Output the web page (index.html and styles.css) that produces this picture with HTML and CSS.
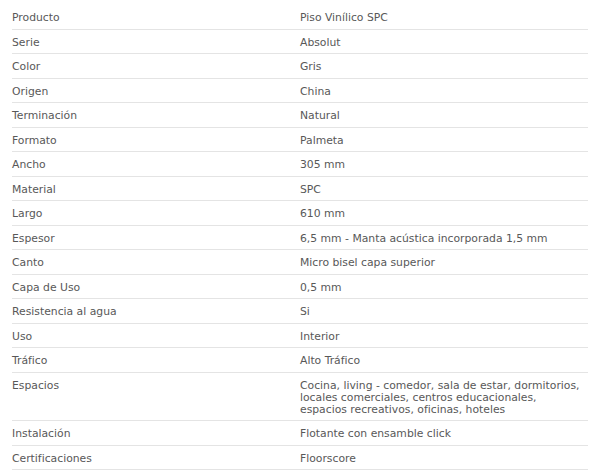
FILE: index.html
```html
<!DOCTYPE html>
<html lang="es">
<head>
<meta charset="utf-8">
<title>Ficha técnica</title>
<link rel="stylesheet" href="styles.css">
</head>
<body>
<div class="specs">
  <div class="row"><div class="k">Producto</div><div class="v">Piso Vinílico SPC</div></div>
  <div class="row"><div class="k">Serie</div><div class="v">Absolut</div></div>
  <div class="row"><div class="k">Color</div><div class="v">Gris</div></div>
  <div class="row"><div class="k">Origen</div><div class="v">China</div></div>
  <div class="row"><div class="k">Terminación</div><div class="v">Natural</div></div>
  <div class="row"><div class="k">Formato</div><div class="v">Palmeta</div></div>
  <div class="row"><div class="k">Ancho</div><div class="v">305 mm</div></div>
  <div class="row"><div class="k">Material</div><div class="v">SPC</div></div>
  <div class="row"><div class="k">Largo</div><div class="v">610 mm</div></div>
  <div class="row"><div class="k">Espesor</div><div class="v">6,5 mm - Manta acústica incorporada 1,5 mm</div></div>
  <div class="row"><div class="k">Canto</div><div class="v">Micro bisel capa superior</div></div>
  <div class="row"><div class="k">Capa de Uso</div><div class="v">0,5 mm</div></div>
  <div class="row"><div class="k">Resistencia al agua</div><div class="v">Si</div></div>
  <div class="row"><div class="k">Uso</div><div class="v">Interior</div></div>
  <div class="row"><div class="k">Tráfico</div><div class="v">Alto Tráfico</div></div>
  <div class="row"><div class="k">Espacios</div><div class="v">Cocina, living - comedor, sala de estar, dormitorios, locales comerciales, centros educacionales, espacios recreativos, oficinas, hoteles</div></div>
  <div class="row"><div class="k">Instalación</div><div class="v">Flotante con ensamble click</div></div>
  <div class="row"><div class="k">Certificaciones</div><div class="v">Floorscore</div></div>
</div>
</body>
</html>
```
FILE: styles.css
```css
html, body {
  margin: 0;
  padding: 0;
  background: #ffffff;
}
body {
  font-family: "DejaVu Sans", "Open Sans", sans-serif;
  font-size: 10.8px;
  color: #585858;
}
.specs {
  margin: 5px 2px 0 12px;
  width: 576px;
}
.row {
  display: grid;
  grid-template-columns: 288px 288px;
  border-bottom: 1px solid #e4e4e4;
  padding: 7px 0 4.5px;
  line-height: 12px;
}
.v {
  padding-right: 4px;
}
```
